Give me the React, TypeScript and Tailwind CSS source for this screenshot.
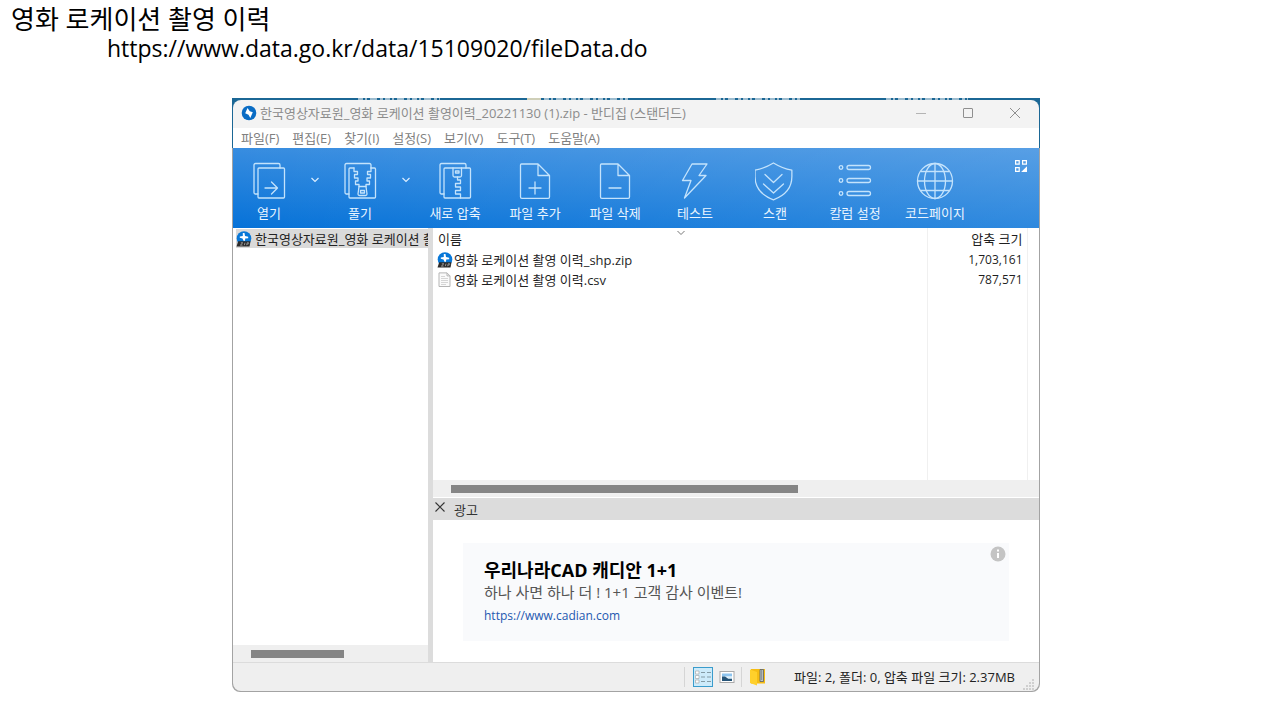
import type { ReactNode } from "react";

const files = [
  { name: "영화 로케이션 촬영 이력_shp.zip", size: "1,703,161", kind: "zip" },
  { name: "영화 로케이션 촬영 이력.csv", size: "787,571", kind: "doc" },
];

const menus = ["파일(F)", "편집(E)", "찾기(I)", "설정(S)", "보기(V)", "도구(T)", "도움말(A)"];

function ZipIcon() {
  return (
    <svg className="size-4 shrink-0" viewBox="0 0 16 16" aria-hidden="true">
      <circle cx="8" cy="7.500" r="7.300" fill="#0878d8" />
      <path d="M6.800 2h1.700l.500 3 3.200.700v1.600L9.200 7.500 9 9.800H7.500L6.500 7.500 3.800 6.800V5.600L6.800 5z" fill="#fff" />
      <path d="M2.200 10.300h12.300L13.500 15.400H.500z" fill="#2b2b2b" />
      <path d="M4.800 11.800h2l-2.400 2.300h2.200M9 11.700l-.700 2.500M10.600 14.200l.700-2.500h1.200q.800.800-.400 1.400h-1" stroke="#bbb" strokeWidth="0.700" fill="none" />
    </svg>
  );
}

function DocIcon() {
  return (
    <svg className="size-4 shrink-0" viewBox="0 0 16 16" aria-hidden="true">
      <path d="M2 .900h8l3 3v10.600H2z" fill="#fafafa" stroke="#b4b4b4" />
      <path d="M10 .900v3h3" fill="none" stroke="#b4b4b4" />
      <path d="M4 4.500h4M4 6.500h7M4 8.500h7M4 10.500h7M4 12.500h5" stroke="#cccccc" strokeWidth="0.800" />
    </svg>
  );
}

function ToolSvg({ children }: { children: ReactNode }) {
  return (
    <svg
      className="size-10"
      viewBox="0 0 40 40"
      fill="none"
      stroke="#c4e3fc"
      strokeWidth="1.300"
      strokeLinecap="round"
      strokeLinejoin="round"
      aria-hidden="true"
    >
      {children}
    </svg>
  );
}

const stack = (
  <>
    <rect x="9" y="7" width="26.500" height="30" rx="1" />
    <path d="M9 33H6.200Q5 33 5 31.500V4Q5 2.500 6.500 2.500H29.500Q31 2.500 31 4V7" />
  </>
);

const fileShape = <path d="M6.500 3h16.500L34.500 14.500V36q0 1.300-1.300 1.300H6.800q-1.300 0-1.300-1.300V4q0-1 1-1zM23 3v11.500h11.500" />;

type Tool = { label: string; wide: boolean; drop: boolean; icon: ReactNode };

const tools: Tool[] = [
  {
    label: "열기",
    wide: false,
    drop: true,
    icon: <>{stack}<path d="M16 27h12.500M22.500 21l6 6-6 6" /></>,
  },
  {
    label: "풀기",
    wide: false,
    drop: true,
    icon: (
      <>
        <path d="M31 7V4q0-1.500-1.500-1.500h-23Q5 2.500 5 4v27.500Q5 33 6.200 33H9" />
        <path d="M14 7h-4q-1 0-1 1v28q0 1 1 1h24.500q1 0 1-1V8q0-1-1-1H31" />
        <path d="M14 7v3.500h3.500v3h-3V17H18v3h-2.500v3.500h3.500v2" />
        <path d="M31 7v3.500h-3.500v3h3V17H27v3h2.500v3.500H26v2" />
        <path d="M19 25.500h7l1 7.500q0 1.500-1.500 1.500h-6Q18 34.500 18 33z" />
        <rect x="20.500" y="29.500" width="4" height="2.500" />
      </>
    ),
  },
  {
    label: "새로 압축",
    wide: true,
    drop: false,
    icon: (
      <>
        {stack}
        <path d="M18 7v7.500q0 1.500 1.500 1.500h5.500q1.500 0 1.500-1.500V7" />
        <rect x="20.500" y="10" width="3.500" height="2" />
        <path d="M22.500 16v3h3v3.500h-5v3.500h5v3.500h-5V33h5v4" />
      </>
    ),
  },
  { label: "파일 추가", wide: true, drop: false, icon: <>{fileShape}<path d="M14 27h12M20 21v12" /></> },
  { label: "파일 삭제", wide: true, drop: false, icon: <>{fileShape}<path d="M14 27h12" /></> },
  {
    label: "테스트",
    wide: true,
    drop: false,
    icon: <path d="M17 3h15L24 14.500h7L9.500 37l6.500-17.500H7.500z" />,
  },
  {
    label: "스캔",
    wide: true,
    drop: false,
    icon: (
      <>
        <path d="M18.500 2Q27.500 7.500 37.500 9.500V16q0 17-19 24Q-.500 33-.500 16V9.500Q9.500 7.500 18.500 2z" transform="translate(.500 0) scale(.970)" />
        <path d="M10 13.500l8.500 8 8.500-8M8.500 23l10 9 10-9" />
      </>
    ),
  },
  {
    label: "칼럼 설정",
    wide: true,
    drop: false,
    icon: (
      <>
        {[6.5, 19.5, 32.5].map((y) => (
          <g key={y}>
            <circle cx="6" cy={y} r="1.800" />
            <rect x="12" y={y - 2} width="23.500" height="4" rx="2" />
          </g>
        ))}
      </>
    ),
  },
  {
    label: "코드페이지",
    wide: true,
    drop: false,
    icon: (
      <>
        <circle cx="20" cy="20" r="17.500" />
        <ellipse cx="20" cy="20" rx="10.500" ry="17.500" />
        <path d="M20 2.500v35M2.500 20h35M6 10.500h28M6 29.500h28" />
      </>
    ),
  },
];

function Toolbar() {
  return (
    <div className="flex h-20 items-start bg-[linear-gradient(to_right,rgba(255,255,255,0),rgba(255,255,255,0.16)),linear-gradient(to_bottom,#388de0,#0672d8)]">
      {tools.map((t) => (
        <div key={t.label} className="flex h-full">
          <button
            type="button"
            className={`flex h-full flex-col items-center pt-[13px] text-[13px] leading-4 whitespace-nowrap text-[#eaf5ff] ${t.wide ? "w-20" : "w-[72px]"}`}
          >
            <ToolSvg>{t.icon}</ToolSvg>
            <span className="mt-1">{t.label}</span>
          </button>
          {t.drop && (
            <button type="button" aria-label={`${t.label} 메뉴`} className="flex w-[19px] items-start justify-center pt-7">
              <svg className="size-2" viewBox="0 0 8 8" fill="none" stroke="#dceeff" strokeWidth="1.200" aria-hidden="true">
                <path d="M.500 2l3.500 3.500L7.500 2" />
              </svg>
            </button>
          )}
        </div>
      ))}
      <button type="button" aria-label="도구 모음 변경" className="mt-3 mr-3 ml-auto">
        <svg className="size-3" viewBox="0 0 12 12" fill="none" stroke="#fff" strokeWidth="1.200" aria-hidden="true">
          <path d="M.600.600h3.600v3.600H.600zM7.600.600h3.800v3.600H7.600zM.600 7.600h3.600v3.800H.600z" />
          <path d="M11.500 7.500v4h-4z" fill="#fff" />
        </svg>
      </button>
    </div>
  );
}

function TitleBar() {
  return (
    <div className="flex h-7 items-center rounded-t-lg bg-[#f3f3f3] pr-[18px] pb-0.5 pl-2 text-[#8c8c8c]">
      <svg className="mr-[3px] size-4 shrink-0" viewBox="0 0 16 16" aria-hidden="true">
        <circle cx="8" cy="8" r="7.300" fill="#0a6cc4" />
        <path d="M6.500 3 8.800 6.200l3 1L9.300 13 7.500 9.800 4.200 8.300z" fill="#fff" />
      </svg>
      <h2 className="text-[13px] leading-4 whitespace-nowrap">
        한국영상자료원_영화 로케이션 촬영이력_20221130 (1).zip - 반디집 (스탠더드)
      </h2>
      <div className="ml-auto flex shrink-0 gap-[35px]">
        <button type="button" aria-label="최소화">
          <svg className="size-3" viewBox="0 0 12 12" stroke="#b4b4b4" aria-hidden="true"><path d="M1 6.500h10" /></svg>
        </button>
        <button type="button" aria-label="최대화">
          <svg className="size-3" viewBox="0 0 12 12" fill="none" stroke="#8f8f8f" aria-hidden="true"><rect x="1.500" y="1.500" width="9" height="9" rx="0.500" /></svg>
        </button>
        <button type="button" aria-label="닫기">
          <svg className="size-3" viewBox="0 0 12 12" stroke="#8f8f8f" aria-hidden="true"><path d="M1 1l10 10M11 1L1 11" /></svg>
        </button>
      </div>
    </div>
  );
}

function FileList() {
  return (
    <div className="relative grid flex-1">
      <svg className="absolute top-px left-[244px] size-2" viewBox="0 0 8 8" fill="none" stroke="#777" aria-hidden="true">
        <path d="M.500 2L4 5.500 7.500 2" />
      </svg>
      <table className="w-full border-collapse text-[13px] leading-4 text-[#1f1f1f]">
        <thead>
          <tr className="h-[22px]">
            <th className="pl-[5px] text-left font-normal">이름</th>
            <th className="w-[100px] border-x border-[#f0f0f0] pr-1 text-right font-normal">압축 크기</th>
            <td className="w-3" />
          </tr>
        </thead>
        <tbody>
          {files.map((f) => (
            <tr key={f.name} className="h-5">
              <td className="pl-1">
                <div className="flex items-center gap-px">
                  {f.kind === "zip" ? <ZipIcon /> : <DocIcon />}
                  <span>{f.name}</span>
                </div>
              </td>
              <td className="border-x border-[#f0f0f0] pr-1 text-right text-xs leading-4">{f.size}</td>
              <td />
            </tr>
          ))}
          <tr>
            <td />
            <td className="border-x border-[#f0f0f0]" />
            <td />
          </tr>
        </tbody>
      </table>
    </div>
  );
}

function Ad() {
  return (
    <>
      <div className="mt-px flex h-[22px] items-center gap-2 bg-[#dcdcdc] pl-px text-[13px] leading-4 text-[#333]">
        <button type="button" aria-label="광고 닫기">
          <svg className="mb-1 size-3" viewBox="0 0 12 12" stroke="#333" strokeWidth="1.100" aria-hidden="true"><path d="M1.500 1.500l9 9M10.500 1.500l-9 9" /></svg>
        </button>
        <span className="pt-0.5">광고</span>
      </div>
      <div className="h-[142px] pt-[23px] pr-[30px] pl-[30px]">
        <div className="flex h-[98px] items-start justify-between bg-[#f9fafc] pt-[3px] pr-[3px] pl-[21px]">
          <div className="pt-3">
            <h3 className="text-lg leading-6 font-bold text-black">우리나라CAD 캐디안 1+1</h3>
            <p className="text-[15px] leading-5 text-[#555]">하나 사면 하나 더 ! 1+1 고객 감사 이벤트!</p>
            <a href="https://www.cadian.com" className="mt-1 block text-xs leading-5 text-[#2458b0]">https://www.cadian.com</a>
          </div>
          <button type="button" aria-label="광고 정보">
            <svg className="size-4" viewBox="0 0 16 16" aria-hidden="true">
              <circle cx="8" cy="8" r="7.500" fill="#c4c4c4" />
              <path d="M7 3.500h2v2H7zM7 7h2v5H7z" fill="#fff" />
            </svg>
          </button>
        </div>
      </div>
    </>
  );
}

function StatusBar() {
  return (
    <div className="flex h-[29px] items-center justify-end rounded-b-lg border-t border-[#dcdcdc] bg-[#efefef] pr-1 text-[13px] leading-4 text-[#222]">
      <span className="mr-2 h-5 w-px bg-[#d5d5d5]" />
      <button type="button" aria-label="자세히 보기" className="mr-1.5">
        <svg className="h-5 w-5" viewBox="0 0 20 20" aria-hidden="true">
          <rect x="0.500" y="0.500" width="19" height="19" fill="#cdebfa" stroke="#3a9ccc" />
          <path d="M2.500 4h3.500v3H2.500zM2.500 8.500h3.500v3H2.500zM2.500 13h3.500v3H2.500z" fill="#fff" stroke="#a9a9a9" strokeWidth="0.700" />
          <path d="M8 5.500h4M14 5.500h4M8 10h4M14 10h4M8 14.500h4M14 14.500h4" stroke="#849ba5" />
        </svg>
      </button>
      <button type="button" aria-label="미리 보기" className="mr-1.5">
        <svg className="h-4 w-4" viewBox="0 0 16 16" aria-hidden="true">
          <rect x="1" y="2.500" width="14" height="11" fill="#fff" stroke="#aaa" />
          <path d="M3 4.500h10v3H3z" fill="#8ec4ef" />
          <path d="M3 7.500h3l3 2h4v2.500H3z" fill="#255478" />
          <path d="M8 7.500h5v2H9z" fill="#d8eefb" />
        </svg>
      </button>
      <span className="mr-2 h-5 w-px bg-[#d5d5d5]" />
      <svg className="mr-7 h-[18px] w-4" viewBox="0 0 16 18" aria-hidden="true">
        <path d="M1 1h14v14.500H1z" fill="#f6bd13" />
        <path d="M0 1.500l7 2.500v13.500l-7-2.500z" fill="#ffd02b" />
        <path d="M10 1.500h3.500v12H10z" fill="#bfc6c8" stroke="#5a6063" strokeWidth="0.800" />
        <path d="M11.700 2.500v10" stroke="#4c5255" strokeDasharray="1 1" />
      </svg>
      <span className="mr-2 whitespace-nowrap">파일: 2, 폴더: 0, 압축 파일 크기: 2.37MB</span>
      <svg className="size-3 self-end" viewBox="0 0 12 12" fill="#cfcfcf" aria-hidden="true">
        <path d="M9 0h2v2H9zM6 3h2v2H6zM9 3h2v2H9zM3 6h2v2H3zM6 6h2v2H6zM9 6h2v2H9zM0 9h2v2H0zM3 9h2v2H3zM6 9h2v2H6zM9 9h2v2H9z" />
      </svg>
    </div>
  );
}

function Backdrop() {
  return (
    <svg className="absolute top-0 left-0 h-0.5 w-full" aria-hidden="true">
      <path d="M126 1h82M312 1h84M484 1h84M654 1h82" stroke="#c9d9e2" strokeWidth="1.500" strokeDasharray="5 2 2 3 7 3 3 2" />
      <path d="M295 1h14" stroke="#cfcfb8" strokeWidth="2" />
    </svg>
  );
}

export default function App() {
  return (
    <div className="flex min-h-screen flex-col bg-white pb-7 font-['Open_Sans','Noto_Sans_CJK_KR',sans-serif]">
      <header className="h-[98px] pt-1 pl-[11px] text-black">
        <h1 className="text-[26px] leading-[30px]">영화 로케이션 촬영 이력</h1>
        <p className="pl-24 text-[23px] leading-7">https://www.data.go.kr/data/15109020/fileData.do</p>
      </header>
      <main className="relative mr-60 ml-[232px] flex flex-1 flex-col rounded-b-lg bg-[linear-gradient(to_bottom,#1b6795_50px,#a3a3a3_50px)] px-px pt-0.5 pb-px">
        <Backdrop />
        <TitleBar />
        <nav className="flex h-5 items-center gap-[13px] bg-white pl-2 text-[13px] leading-4 text-[#808080]">
          {menus.map((m) => (
            <button key={m} type="button" className="whitespace-nowrap">{m}</button>
          ))}
        </nav>
        <Toolbar />
        <div className="flex flex-1 bg-white">
          <aside className="flex w-[195px] shrink-0 flex-col">
            <div className="mt-px ml-[3px] flex h-[19px] items-center gap-[3px] overflow-hidden bg-[#dadada] text-[13px] leading-4 whitespace-nowrap text-[#222]">
              <ZipIcon />
              <span>한국영상자료원_영화 로케이션 촬</span>
            </div>
            <div className="mt-auto h-[17px] bg-[#efefef] pt-[5px] pl-[18px]">
              <div className="h-2 w-[93px] bg-[#858585]" />
            </div>
          </aside>
          <div className="w-[5px] shrink-0 bg-[#dcdcdc]" />
          <section className="flex min-w-0 flex-1 flex-col">
            <FileList />
            <div className="h-[17px] bg-[#efefef] pt-[5px] pl-[18px]">
              <div className="h-2 w-[347px] bg-[#858585]" />
            </div>
            <Ad />
          </section>
        </div>
        <StatusBar />
      </main>
    </div>
  );
}
